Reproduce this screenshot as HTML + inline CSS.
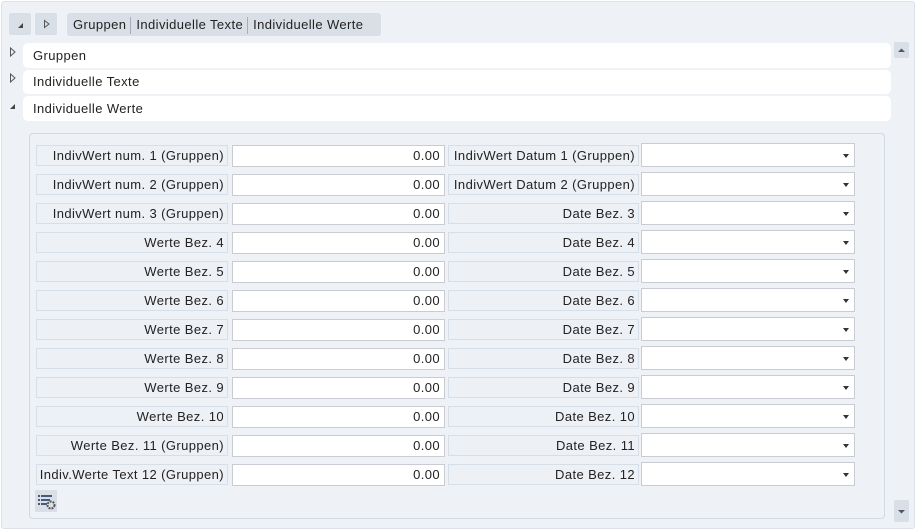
<!DOCTYPE html>
<html><head><style>
*{box-sizing:border-box;margin:0;padding:0}
body{width:916px;height:531px;background:#fff;font-family:"Liberation Sans",sans-serif;font-size:13px;letter-spacing:0.4px;color:#222;position:relative;overflow:hidden}
.abs{position:absolute}
.outer{left:1px;top:1px;width:914px;height:528px;background:#eef1f5;border:1px solid #dde2e8;border-radius:3px}
.btn{top:13px;width:22px;height:22px;background:#d9dfe7;border-radius:2px}
.crumb{left:67px;top:13px;width:314px;height:23px;background:#d9dfe7;border-radius:3px;line-height:23px;padding-left:6px;white-space:nowrap}
.crumb span.s{display:inline-block;width:1px;height:17px;background:#aab;vertical-align:middle;margin:0 5px 0 4px}
.sec{left:23px;width:868px;background:#fff;border-radius:5px;padding-left:10px}
.panel{left:29px;top:133px;width:856px;height:386px;border:1px solid #d3d9e1;border-radius:4px;background:#eef1f5}
.lab{height:21px;background:#edf0f5;border:1px solid #d6dee8;text-align:right;padding-right:3px;line-height:19px;white-space:nowrap}
.inp{height:22px;background:#fff;border:1px solid #c9cdd3;text-align:right;padding-right:4px;line-height:20px}
.dd{height:24px;background:#fff;border:1px solid #c9cdd3}
.dd:after{content:"";position:absolute;right:5px;top:10px;border:3.5px solid transparent;border-top:4px solid #333}
.sb{left:894px;width:15px;height:16px;background:#d9dfe7;border-radius:2px}
</style></head><body>
<div class="abs outer"></div>
<div class="abs btn" style="left:9px"><svg width="22" height="22"><path d="M9 15 L14 10 L14 15Z" fill="#444"/></svg></div>
<div class="abs btn" style="left:35px"><svg width="22" height="22"><path d="M9.5 7.5 L14 11 L9.5 14.5Z" fill="none" stroke="#555"/></svg></div>
<div class="abs crumb">Gruppen<span class="s"></span>Individuelle Texte<span class="s"></span>Individuelle Werte</div>
<svg class="abs" style="left:9px;top:47px" width="8" height="10"><path d="M1.5 1 L6 5 L1.5 9Z" fill="none" stroke="#555"/></svg>
<svg class="abs" style="left:9px;top:73px" width="8" height="10"><path d="M1.5 1 L6 5 L1.5 9Z" fill="none" stroke="#555"/></svg>
<svg class="abs" style="left:9px;top:102px" width="8" height="8"><path d="M1 7 L6 2 L6 7Z" fill="#444"/></svg>
<div class="abs sec" style="top:43px;height:25px;line-height:25px">Gruppen</div>
<div class="abs sec" style="top:70px;height:24px;line-height:24px">Individuelle Texte</div>
<div class="abs sec" style="top:96px;height:25px;line-height:25px">Individuelle Werte</div>
<div class="abs sb" style="top:42px"><svg width="15" height="16"><path d="M4 10 L7.5 6.5 L11 10Z" fill="#556"/></svg></div>
<div class="abs sb" style="top:500px;height:22px"><svg width="15" height="22"><path d="M4 10 L7.5 13.5 L11 10Z" fill="#556"/></svg></div>
<div class="abs panel"></div>
<div id="rows"></div>
<div class="abs" style="left:35px;top:490px;width:22px;height:22px;background:#d9dfe7">
<svg width="22" height="22"><g fill="#4a5a78"><rect x="3" y="5" width="2" height="2"/><rect x="6" y="5" width="11" height="2"/><rect x="3" y="9" width="2" height="2"/><rect x="6" y="9" width="9" height="2"/><rect x="3" y="13" width="2" height="2"/><rect x="6" y="13" width="6" height="2"/></g><circle cx="16" cy="15" r="3.5" fill="none" stroke="#555" stroke-width="2" stroke-dasharray="2 1"/></svg></div>
<script>
var L=["IndivWert num. 1 (Gruppen)","IndivWert num. 2 (Gruppen)","IndivWert num. 3 (Gruppen)","Werte Bez. 4","Werte Bez. 5","Werte Bez. 6","Werte Bez. 7","Werte Bez. 8","Werte Bez. 9","Werte Bez. 10","Werte Bez. 11 (Gruppen)","Indiv.Werte Text 12 (Gruppen)"];
var R=["IndivWert Datum 1 (Gruppen)","IndivWert Datum 2 (Gruppen)","Date Bez. 3","Date Bez. 4","Date Bez. 5","Date Bez. 6","Date Bez. 7","Date Bez. 8","Date Bez. 9","Date Bez. 10","Date Bez. 11","Date Bez. 12"];
var h="";for(var i=0;i<12;i++){var y=145+i*29;
h+='<div class="abs lab" style="left:36px;top:'+y+'px;width:192px">'+L[i]+'</div>';
h+='<div class="abs inp" style="left:232px;top:'+y+'px;width:213px">0.00</div>';
h+='<div class="abs lab" style="left:448px;top:'+y+'px;width:191px">'+R[i]+'</div>';
h+='<div class="abs dd" style="left:641px;top:'+(y-2)+'px;width:214px"></div>';}
document.getElementById("rows").innerHTML=h;
</script>
</body></html>
